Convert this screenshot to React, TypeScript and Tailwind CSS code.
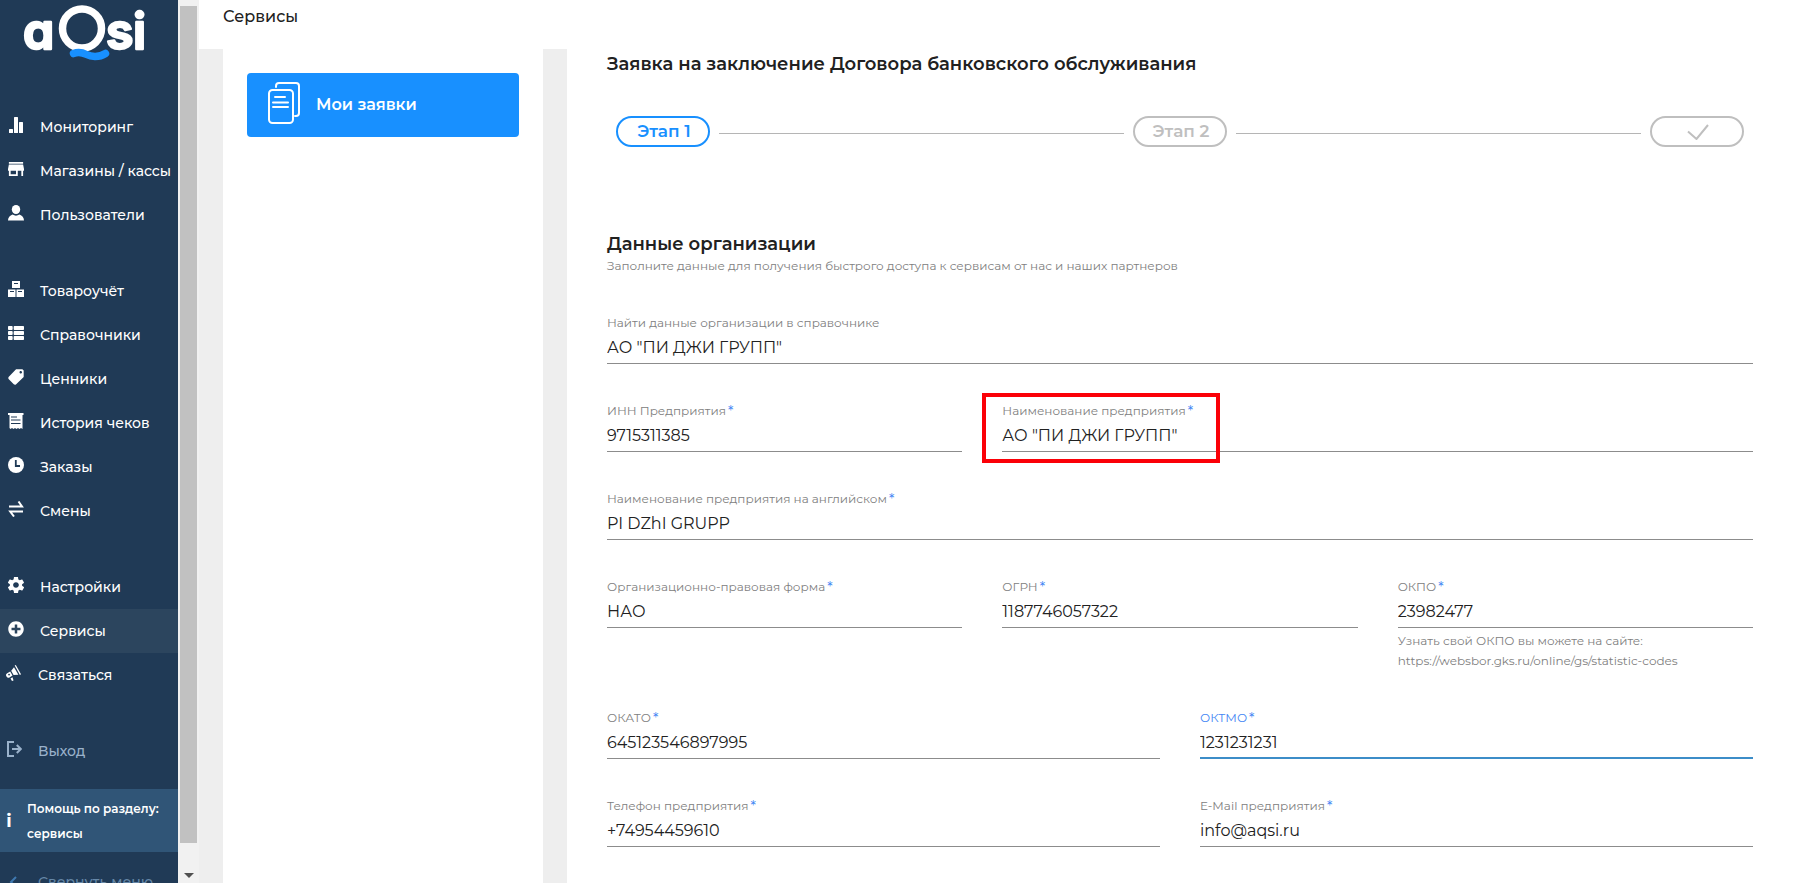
import { ComponentType, ReactNode } from "react";
import clsx from "clsx";
import { FaPlusCircle, FaThList } from "react-icons/fa";
import { IoMdPricetag, IoMdSettings } from "react-icons/io";
import { MdStore } from "react-icons/md";

type IconProps = { className?: string };

function BarsIcon({ className }: IconProps) {
    return (
        <svg viewBox="0 0 16 16" fill="currentColor" className={className}>
            <rect x="1" y="12" width="4" height="4" rx="0.5" />
            <rect x="6" y="0" width="4" height="16" rx="0.5" />
            <rect x="11" y="5" width="4" height="11" rx="0.5" />
        </svg>
    );
}

// Package icons carry inner padding, so the view box is cropped to the glyph.
function StoreIcon({ className }: IconProps) {
    return <MdStore viewBox="3 3 18 18" className={className} />;
}

function TagIcon({ className }: IconProps) {
    return <IoMdPricetag viewBox="56 56 400 400" className={className} />;
}

function GearIcon({ className }: IconProps) {
    return <IoMdSettings viewBox="48 48 416 416" className={className} />;
}

function PersonIcon({ className }: IconProps) {
    return (
        <svg viewBox="0 0 16 16" fill="currentColor" className={className}>
            <ellipse cx="8" cy="4.500" rx="4.200" ry="4.500" />
            <path d="M0 15.500c0-3 1.800-5 4.600-6 2 1.500 4.800 1.500 6.800 0 2.800 1 4.600 3 4.600 6z" />
        </svg>
    );
}

function BoxesIcon({ className }: IconProps) {
    return (
        <svg viewBox="0 0 16 16" fill="currentColor" className={className}>
            <path fillRule="evenodd" d="M4 0h8v7H4zM6 2v1h4V2z" />
            <path fillRule="evenodd" d="M0 8.500h7.500V16H0zM2 10v1h4v-1z" />
            <path fillRule="evenodd" d="M8.500 8.500H16V16H8.500zM10 10v1h4v-1z" />
        </svg>
    );
}

function ReceiptIcon({ className }: IconProps) {
    return (
        <svg viewBox="0 0 16 16" fill="currentColor" className={className}>
            <path
                fillRule="evenodd"
                d="M0 0h15.500v2h-1v14l-1.500-1-1.500 1-1.500-1-1.500 1-1.500-1L5.500 16 4 15l-1.500 1-1-1V2H0zM3 3.500v1h6v-1zM3 6.500v1h9.500v-1zM3 10v1h9.500v-1z"
            />
        </svg>
    );
}

function ClockIcon({ className }: IconProps) {
    return (
        <svg viewBox="0 0 16 16" className={className}>
            <circle cx="8" cy="8" r="8" fill="currentColor" />
            <path d="M7.800 3v6H12" fill="none" stroke="#203a56" strokeWidth="1.800" />
        </svg>
    );
}

function SwapIcon({ className }: IconProps) {
    return (
        <svg viewBox="0 0 16 16" fill="none" stroke="currentColor" strokeWidth="2" className={className}>
            <path d="M1 5.500h13L10.500 0.500" />
            <path d="M15 10.500H2.200l3.800 5" />
        </svg>
    );
}

function MegaphoneIcon({ className }: IconProps) {
    return (
        <svg viewBox="0 0 16 16" fill="currentColor" className={className}>
            <path d="M9.800 0l5.200 9.300-1.100.6L8.700.6z" />
            <path d="M8 2.200l4.400 7.600-4.800.2-2.400-4.200z" />
            <path
                fillRule="evenodd"
                d="M4.200 6.500l2.300 4-2.700 1.700a2.300 2.300 0 0 1-2.600-4zM3 8.800a.8.8 0 1 0 .1 0z"
            />
            <path d="M4.500 13.500l2-1.200 1 3.300-1.500.4z" />
        </svg>
    );
}

function ExitIcon({ className }: IconProps) {
    return (
        <svg viewBox="0 0 16 16" fill="none" stroke="currentColor" strokeWidth="2" className={className}>
            <path d="M8 1H2v14h6" />
            <path d="M6 8h8.500M10.800 4l4 4-4 4" />
        </svg>
    );
}

function DocsIcon({ className }: IconProps) {
    return (
        <svg
            viewBox="0 0 32 42"
            fill="none"
            stroke="currentColor"
            strokeWidth="2"
            strokeLinecap="round"
            className={className}
        >
            <rect x="1" y="8" width="24" height="33" rx="3.500" />
            <path d="M8 5V4a3 3 0 0 1 3-3h17a3 3 0 0 1 3 3v27a3 3 0 0 1-3 3h-1" />
            <path d="M7 15h10M5 20.500h15M5 25h15" />
        </svg>
    );
}

function Logo() {
    return (
        <svg viewBox="0 0 178 66" role="img" aria-label="aQsi" className="block h-[66px] w-full overflow-visible">
            <g
                fill="#fff"
                stroke="#fff"
                strokeWidth="2.500"
                strokeLinejoin="round"
                fontSize="50"
                className="font-['Inter',sans-serif] font-semibold [font-feature-settings:'cv11']"
            >
                <text x="23" y="49">a</text>
                <text x="106" y="49">s</text>
                <text x="133" y="49">i</text>
            </g>
            <circle cx="82" cy="28.500" r="19.500" fill="none" stroke="#fff" strokeWidth="7.500" />
            <path
                d="M73.500 53.500c5-2 9-1 13 1s12 3.500 19-1"
                fill="none"
                stroke="#1890ff"
                strokeWidth="7.500"
                strokeLinecap="round"
            />
        </svg>
    );
}

type NavItem = { label: string; icon: ComponentType<IconProps>; active?: boolean; compact?: boolean };

const NAV_GROUPS: NavItem[][] = [
    [
        { label: "Мониторинг", icon: BarsIcon },
        { label: "Магазины / кассы", icon: StoreIcon },
        { label: "Пользователи", icon: PersonIcon },
    ],
    [
        { label: "Товароучёт", icon: BoxesIcon },
        { label: "Справочники", icon: FaThList },
        { label: "Ценники", icon: TagIcon },
        { label: "История чеков", icon: ReceiptIcon },
        { label: "Заказы", icon: ClockIcon },
        { label: "Смены", icon: SwapIcon },
    ],
    [
        { label: "Настройки", icon: GearIcon },
        { label: "Сервисы", icon: FaPlusCircle, active: true },
        { label: "Связаться", icon: MegaphoneIcon, compact: true },
    ],
];

function Sidebar() {
    return (
        <aside className="w-[178px] shrink-0 overflow-hidden bg-[#203a56] text-sm font-medium whitespace-nowrap text-white">
            <Logo />
            <nav className="mt-[39px] flex flex-col gap-8">
                {NAV_GROUPS.map((group, i) => (
                    <ul key={i}>
                        {group.map(({ label, icon: Icon, active, compact }) => (
                            <li key={label}>
                                <a
                                    href="#"
                                    className={clsx(
                                        "flex h-11 items-center gap-4",
                                        compact ? "pl-1.5" : "pl-2",
                                        active && "bg-[#2c455e]"
                                    )}
                                >
                                    <Icon className="mb-1 size-4 shrink-0" />
                                    {label}
                                </a>
                            </li>
                        ))}
                    </ul>
                ))}
                <a href="#" className="flex h-11 items-center gap-4 pl-1.5 text-[#9ab2cb]">
                    <ExitIcon className="mb-1 size-4 shrink-0" />
                    Выход
                </a>
            </nav>
            <a
                href="#"
                className="mt-4 flex h-[63px] items-center gap-[15px] bg-[#305577] pl-1.5 text-xs leading-[25px] font-semibold whitespace-normal"
            >
                <span className="w-1.5 text-center text-lg font-bold">i</span>
                <span>
                    Помощь по разделу:
                    <br />
                    сервисы
                </span>
            </a>
            <button type="button" className="mt-2 flex h-11 items-center gap-4 pl-1.5 text-[#6688a8]">
                <svg viewBox="0 0 16 16" fill="none" stroke="#3f79b0" strokeWidth="2" className="size-4">
                    <path d="M10 3L5 8l5 5" />
                </svg>
                Свернуть меню
            </button>
        </aside>
    );
}

function SidebarScrollbar() {
    return (
        <div className="flex w-[21px] shrink-0 flex-col bg-[#f1f1f1] px-0.5 pt-1.5">
            <div className="flex-1 bg-[#c1c1c1]" />
            <div className="flex h-10 items-end justify-center pb-[5px]">
                <svg viewBox="0 0 10 5" className="h-[5px] w-2.5">
                    <path d="M0 0h10L5 5z" fill="#505050" />
                </svg>
            </div>
        </div>
    );
}

type StepProps = { children: ReactNode; active?: boolean };

function Step({ children, active }: StepProps) {
    return (
        <li
            className={clsx(
                "flex h-[31px] w-[94px] shrink-0 items-center justify-center rounded-2xl border-2 pl-0.5 text-[17px] font-semibold",
                active ? "border-[#1890ff] text-[#1890ff]" : "border-[#bfbfbf] text-[#bfbfbf]"
            )}
        >
            {children}
        </li>
    );
}

function StepLine() {
    return <li aria-hidden className="mt-1 h-px flex-1 bg-[#b5b5b5]" />;
}

type FieldProps = {
    id: string;
    label: string;
    value: string;
    required?: boolean;
    focused?: boolean;
    highlighted?: boolean;
    hint?: string[];
    className?: string;
};

function Field({ id, label, value, required, focused, highlighted, hint, className }: FieldProps) {
    return (
        <div className={clsx("relative", className)}>
            <label
                htmlFor={id}
                className={clsx("block h-5 text-xs leading-5", focused ? "text-[#4285f4]" : "text-[#808080]")}
            >
                {label}
                {required && (
                    <span className="ml-0.5 align-[-1px] text-sm leading-none text-[#4285f4]">*</span>
                )}
            </label>
            <input
                id={id}
                type="text"
                defaultValue={value}
                className={clsx(
                    "block h-[31px] w-full bg-transparent text-base text-[#212121] outline-none",
                    focused ? "border-b-2 border-[#3c8dc8] pb-px" : "border-b border-[#8c8c8c] pb-0.5"
                )}
            />
            {hint && (
                <p className="mt-[3px] text-xs leading-5 text-[#808080]">
                    {hint.map((line) => (
                        <span key={line} className="block">{line}</span>
                    ))}
                </p>
            )}
            {highlighted && (
                <div className="pointer-events-none absolute -top-2 -left-5 h-[70px] w-[238px] border-4 border-[#fb0007]" />
            )}
        </div>
    );
}

export default function App() {
    return (
        <div className="flex h-screen overflow-hidden bg-[#eeeeee] font-['Montserrat','Inter',sans-serif] text-[#212121]">
            <Sidebar />
            <SidebarScrollbar />

            <div className="flex min-w-0 flex-1 flex-col">
                <header className="h-[49px] shrink-0 bg-white px-6 pt-[7px]">
                    <h1 className="text-base leading-5 font-medium">Сервисы</h1>
                </header>

                <div className="flex min-h-0 flex-1 gap-6 pl-6">
                    <div className="w-80 shrink-0 bg-white p-6">
                        <button
                            type="button"
                            className="flex h-16 w-full items-center gap-4 rounded bg-[#1890ff] pl-[21px] text-base font-semibold text-white"
                        >
                            <DocsIcon className="mb-1 h-[42px] w-8" />
                            Мои заявки
                        </button>
                    </div>

                    <main className="min-w-0 flex-1 overflow-hidden bg-white px-10">
                        <h2 className="mt-[3px] text-lg leading-6 font-semibold">
                            Заявка на заключение Договора банковского обслуживания
                        </h2>

                        <ol className="mx-[9px] mt-10 flex items-center gap-[9px]">
                            <Step active>Этап 1</Step>
                            <StepLine />
                            <Step>Этап 2</Step>
                            <StepLine />
                            <Step>
                                <svg
                                    viewBox="0 0 22 16"
                                    fill="none"
                                    stroke="currentColor"
                                    strokeWidth="2"
                                    className="h-4 w-[22px]"
                                >
                                    <path d="M1 7.500l8.500 7.500L21 1" />
                                </svg>
                            </Step>
                        </ol>

                        <h3 className="mt-[85px] text-lg leading-6 font-semibold">Данные организации</h3>
                        <p className="text-xs leading-5 text-[#808080]">
                            Заполните данные для получения быстрого доступа к сервисам от нас и наших партнеров
                        </p>

                        <form className="mt-[37px] grid grid-cols-6 gap-x-10 gap-y-[37px]">
                            <Field
                                id="search"
                                label="Найти данные организации в справочнике"
                                value={'АО "ПИ ДЖИ ГРУПП"'}
                                className="col-span-6"
                            />
                            <Field id="inn" label="ИНН Предприятия" value="9715311385" required className="col-span-2" />
                            <Field
                                id="name"
                                label="Наименование предприятия"
                                value={'АО "ПИ ДЖИ ГРУПП"'}
                                required
                                highlighted
                                className="col-span-4"
                            />
                            <Field
                                id="name-en"
                                label="Наименование предприятия на английском"
                                value="PI DZhI GRUPP"
                                required
                                className="col-span-6"
                            />
                            <Field
                                id="legal-form"
                                label="Организационно-правовая форма"
                                value="НАО"
                                required
                                className="col-span-2"
                            />
                            <Field id="ogrn" label="ОГРН" value="1187746057322" required className="col-span-2" />
                            <Field
                                id="okpo"
                                label="ОКПО"
                                value="23982477"
                                required
                                hint={[
                                    "Узнать свой ОКПО вы можете на сайте:",
                                    "https://websbor.gks.ru/online/gs/statistic-codes",
                                ]}
                                className="col-span-2"
                            />
                            <Field id="okato" label="ОКАТО" value="645123546897995" required className="col-span-3" />
                            <Field id="oktmo" label="ОКТМО" value="1231231231" required focused className="col-span-3" />
                            <Field
                                id="phone"
                                label="Телефон предприятия"
                                value="+74954459610"
                                required
                                className="col-span-3"
                            />
                            <Field
                                id="email"
                                label="E-Mail предприятия"
                                value="info@aqsi.ru"
                                required
                                className="col-span-3"
                            />
                        </form>
                    </main>
                </div>
            </div>
        </div>
    );
}
